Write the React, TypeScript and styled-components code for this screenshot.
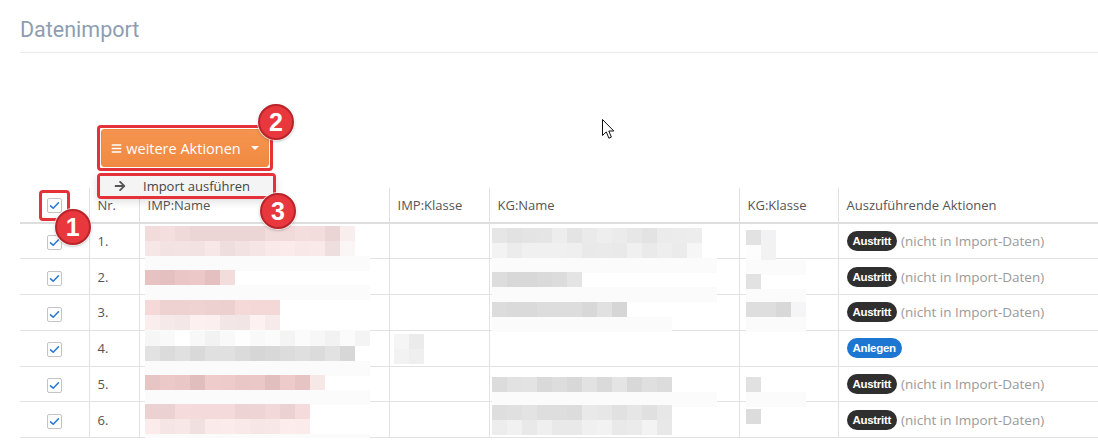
import React from "react";
import styled, { createGlobalStyle } from "styled-components";
import { FaArrowRight, FaBars } from "react-icons/fa";

type Strip = { n: number; color: string; tail?: string };
type Blob = { top: number; left: number; strips: Strip[] };

type Row = {
  nr: number;
  imp?: Blob;
  impKlasse?: Blob;
  kgName?: Blob;
  kgKlasse?: Blob;
  action: "Austritt" | "Anlegen";
};

const FAINT = "#fbfbfb";

const rows: Row[] = [
  {
    nr: 1,
    imp: { top: 2, left: 5, strips: [{ n: 13, color: "#efd9d9", tail: "#f8eeee" }, { n: 13, color: "#f4e4e4", tail: "#fbf6f6" }, { n: 15, color: FAINT }] },
    kgName: { top: 4, left: 2, strips: [{ n: 14, color: "#e7e7e7" }, { n: 14, color: "#f0f0f0" }, { n: 15, color: FAINT }] },
    kgKlasse: { top: 6, left: 6, strips: [{ n: 1, color: "#e3e2e2", tail: "#f2f2f4" }, { n: 2, color: "#f8f8f8" }, { n: 4, color: FAINT }] },
    action: "Austritt",
  },
  {
    nr: 2,
    imp: { top: 11, left: 5, strips: [{ n: 5, color: "#eac6c6", tail: "#f3dcdc" }, { n: 15, color: FAINT }] },
    kgName: { top: 13, left: 2, strips: [{ n: 6, color: "#dddddd" }, { n: 15, color: FAINT }] },
    kgKlasse: { top: 15, left: 6, strips: [{ n: 1, color: "#e0e0e0" }, { n: 4, color: FAINT }] },
    action: "Austritt",
  },
  {
    nr: 3,
    imp: { top: 5, left: 5, strips: [{ n: 9, color: "#eed1d1" }, { n: 9, color: "#f7eaea" }, { n: 15, color: FAINT }] },
    kgName: { top: 7, left: 2, strips: [{ n: 9, color: "#dcdcdc" }, { n: 12, color: FAINT }] },
    kgKlasse: { top: 7, left: 6, strips: [{ n: 3, color: "#dbdbdb", tail: "#f5f5f7" }, { n: 4, color: FAINT }] },
    action: "Austritt",
  },
  {
    nr: 4,
    imp: { top: 0, left: 5, strips: [{ n: 15, color: "#f8f8f8" }, { n: 14, color: "#dcdcdc" }, { n: 15, color: FAINT }] },
    impKlasse: { top: 3, left: 4, strips: [{ n: 2, color: "#f1f1f1" }, { n: 2, color: "#ebebeb" }] },
    action: "Anlegen",
  },
  {
    nr: 5,
    imp: { top: 8, left: 5, strips: [{ n: 11, color: "#e8c5c5", tail: "#f7e8e8" }, { n: 15, color: FAINT }] },
    kgName: { top: 10, left: 2, strips: [{ n: 12, color: "#dedede" }, { n: 15, color: FAINT }] },
    kgKlasse: { top: 10, left: 6, strips: [{ n: 1, color: "#dcdcdc" }, { n: 4, color: FAINT }] },
    action: "Austritt",
  },
  {
    nr: 6,
    imp: { top: 2, left: 5, strips: [{ n: 11, color: "#f0d6d6" }, { n: 11, color: "#f6e6e6" }, { n: 15, color: FAINT }] },
    kgName: { top: 3, left: 2, strips: [{ n: 12, color: "#e3e3e3" }, { n: 12, color: "#efefef" }] },
    kgKlasse: { top: 7, left: 6, strips: [{ n: 1, color: "#dedede" }] },
    action: "Austritt",
  },
];

// small deterministic jitter so the pixelated blur looks like real mosaic blocks
const jitter = (hex: string, seed: number) => {
  if (hex === FAINT) return hex;
  const v = ((Math.sin(seed * 12.9898) * 43758.5453) % 1 + 1) % 1;
  const d = Math.round((v - 0.5) * 14);
  const ch = [1, 3, 5].map((i) => Math.max(0, Math.min(255, parseInt(hex.slice(i, i + 2), 16) + d)));
  return `rgb(${ch.join(",")})`;
};

const Mosaic: React.FC<{ blob?: Blob; seed: number }> = ({ blob, seed }) => {
  if (!blob) return null;
  return (
    <MosaicWrap $top={blob.top} $left={blob.left}>
      {blob.strips.map((s, si) => (
        <MosaicStrip key={si}>
          {Array.from({ length: s.n }).map((_, i) => (
            <MosaicCell key={i} style={{ background: jitter(s.color, seed * 97 + si * 31 + i) }} />
          ))}
          {s.tail && <MosaicCell style={{ background: s.tail }} />}
        </MosaicStrip>
      ))}
    </MosaicWrap>
  );
};

const Check: React.FC = () => (
  <CheckBox>
    <svg width="11" height="9" viewBox="0 0 11 9">
      <polyline points="1.5,4.8 4.2,7.2 9.5,1.8" fill="none" stroke="#2b7bd3" strokeWidth="1.6" strokeLinecap="round" strokeLinejoin="round" />
    </svg>
  </CheckBox>
);

const Cursor: React.FC = () => (
  <CursorMark width="13" height="21" viewBox="0 0 13 21">
    <path d="M0.5 0.5 L0.5 16.5 L4.3 12.9 L6.9 19.2 L9.4 18.1 L6.8 12 L11.8 12 Z" fill="#fff" stroke="#111" strokeWidth="1" strokeLinejoin="round" />
  </CursorMark>
);

export default function App() {
  return (
    <>
      <GlobalStyle />
      <Page>
        <Title>Datenimport</Title>
        <Toolbar>
          <Highlight $pad={1}>
            <ActionButton>
              <FaBars size={11} />
              <span>weitere Aktionen</span>
              <Caret />
            </ActionButton>
            <NumberBadge $top={-24} $left={158}>2</NumberBadge>
            <Menu>
              <Highlight $pad={0}>
                <MenuItem>
                  <FaArrowRight size={12} color="#555" />
                  <span>Import ausführen</span>
                </MenuItem>
                <NumberBadge $top={17} $left={160}>3</NumberBadge>
              </Highlight>
            </Menu>
          </Highlight>
        </Toolbar>

        <Table>
          <colgroup>
            <col style={{ width: 69 }} />
            <col style={{ width: 50 }} />
            <col style={{ width: 250 }} />
            <col style={{ width: 100 }} />
            <col style={{ width: 250 }} />
            <col style={{ width: 99 }} />
            <col />
          </colgroup>
          <thead>
            <tr>
              <Th $center>
                <Highlight $pad={5}>
                  <Check />
                  <NumberBadge $top={16} $left={13}>1</NumberBadge>
                </Highlight>
              </Th>
              <Th>Nr.</Th>
              <Th>IMP:Name</Th>
              <Th>IMP:Klasse</Th>
              <Th>KG:Name</Th>
              <Th>KG:Klasse</Th>
              <Th>Auszuführende Aktionen</Th>
            </tr>
          </thead>
          <tbody>
            {rows.map((r) => (
              <tr key={r.nr}>
                <Td $center>
                  <Check />
                </Td>
                <Td>{r.nr}.</Td>
                <BlobTd><Mosaic blob={r.imp} seed={r.nr * 4} /></BlobTd>
                <BlobTd><Mosaic blob={r.impKlasse} seed={r.nr * 4 + 1} /></BlobTd>
                <BlobTd><Mosaic blob={r.kgName} seed={r.nr * 4 + 2} /></BlobTd>
                <BlobTd><Mosaic blob={r.kgKlasse} seed={r.nr * 4 + 3} /></BlobTd>
                <Td>
                  <ActionLine>
                    <Label $kind={r.action}>{r.action}</Label>
                    {r.action === "Austritt" && <Hint>(nicht in Import-Daten)</Hint>}
                  </ActionLine>
                </Td>
              </tr>
            ))}
          </tbody>
        </Table>
        <Cursor />
      </Page>
    </>
  );
}

const GlobalStyle = createGlobalStyle`
  body {
    margin: 0;
    background: #fff;
    overflow: hidden;
    font-family: "Open Sans", "Noto Sans", sans-serif;
  }
`;

const Page = styled.div`
  position: relative;
  width: 1078px;
  padding-left: 20px;
`;

const Title = styled.h1`
  margin: 0;
  padding: 16px 0 8px;
  font-family: Roboto, "Noto Sans", sans-serif;
  font-weight: 400;
  font-size: 21.5px;
  line-height: 28px;
  color: #8d9db2;
  border-bottom: 1px solid #e8ebee;
`;

const Toolbar = styled.div`
  display: flex;
  padding-left: 77px;
  margin-top: 72px;
  margin-bottom: 17px;
`;

const Highlight = styled.div<{ $pad: number }>`
  position: relative;
  display: inline-flex;
  padding: ${(p) => p.$pad}px;
  border: 3px solid #e5323a;
  border-radius: 4px;
`;

const NumberBadge = styled.div<{ $top: number; $left: number }>`
  position: absolute;
  top: ${(p) => p.$top}px;
  left: ${(p) => p.$left}px;
  z-index: 5;
  width: 36px;
  height: 36px;
  box-sizing: border-box;
  border-radius: 50%;
  background: #e8383e;
  border: 2px solid #b8242a;
  box-shadow: 0 0 0 1px rgba(255, 255, 255, 0.7), 0 1px 3px rgba(0, 0, 0, 0.35);
  color: #fff;
  font-family: "Liberation Sans", Arial, sans-serif;
  font-weight: 700;
  font-size: 25px;
  line-height: 32px;
  text-align: center;
`;

const ActionButton = styled.button`
  display: flex;
  align-items: center;
  justify-content: center;
  gap: 4px;
  width: 168px;
  height: 38px;
  padding: 0;
  border: 1px solid #ec8a45;
  border-radius: 3px;
  background: linear-gradient(#f5944f, #f18a42);
  color: #fff;
  font-family: "Open Sans", "Noto Sans", sans-serif;
  font-size: 14.5px;
  svg {
    margin-top: 1px;
  }
`;

const Caret = styled.span`
  margin-left: 6px;
  width: 0;
  height: 0;
  border-left: 4px solid transparent;
  border-right: 4px solid transparent;
  border-top: 4px solid #fff;
`;

const Menu = styled.div`
  position: absolute;
  top: 45px;
  left: -3px;
  z-index: 4;
  background: #fff;
  box-shadow: 0 3px 8px rgba(0, 0, 0, 0.12);
`;

const MenuItem = styled.div`
  display: flex;
  align-items: center;
  gap: 17px;
  width: 159px;
  height: 20px;
  padding: 0 0 0 14px;
  background: #f4f4f4;
  color: #444;
  font-size: 13px;
`;

const Table = styled.table`
  width: 1078px;
  border-collapse: collapse;
  table-layout: fixed;
  color: #555;
  font-size: 13px;
`;

const Th = styled.th<{ $center?: boolean }>`
  height: 33.5px;
  padding: 0 8px;
  text-align: ${(p) => (p.$center ? "center" : "left")};
  font-weight: 400;
  border-bottom: 2px solid #dedede;
  & + & {
    border-left: 1px solid #e0e0e0;
  }
  ${Highlight} {
    vertical-align: middle;
    margin-top: 1px;
  }
`;

const Td = styled.td<{ $center?: boolean }>`
  height: 34.8px;
  padding: 0 8px;
  text-align: ${(p) => (p.$center ? "center" : "left")};
  border-bottom: 1px solid #e2e2e2;
  & + & {
    border-left: 1px solid #e2e2e2;
  }
`;

const BlobTd = styled(Td)`
  padding: 0;
  vertical-align: top;
  border-left: 1px solid #e2e2e2;
`;

const MosaicWrap = styled.div<{ $top: number; $left: number }>`
  position: relative;
  z-index: 1;
  height: 0;
  padding-top: ${(p) => p.$top}px;
  margin-left: ${(p) => p.$left}px;
`;

const MosaicStrip = styled.div`
  display: flex;
  height: 15px;
`;

const MosaicCell = styled.div`
  width: 15px;
  height: 15px;
  flex: none;
`;

const CheckBox = styled.span`
  display: inline-flex;
  align-items: center;
  justify-content: center;
  width: 15px;
  height: 15px;
  box-sizing: border-box;
  border: 1px solid #c4c4c4;
  border-radius: 2px;
  background: #fff;
  vertical-align: middle;
`;

const ActionLine = styled.div`
  display: flex;
  align-items: center;
  gap: 4px;
`;

const Label = styled.span<{ $kind: string }>`
  display: inline-block;
  padding: 0 6px;
  height: 20px;
  line-height: 20px;
  border-radius: 10px;
  background: ${(p) => (p.$kind === "Anlegen" ? "#1d77d2" : "#2f2f2f")};
  color: #fff;
  font-family: "Liberation Sans", Arial, sans-serif;
  font-weight: 700;
  font-size: 11.5px;
  letter-spacing: -0.3px;
`;

const Hint = styled.span`
  color: #9a9a9a;
  font-size: 13.5px;
`;

const CursorMark = styled.svg`
  position: absolute;
  left: 602px;
  top: 119px;
`;
